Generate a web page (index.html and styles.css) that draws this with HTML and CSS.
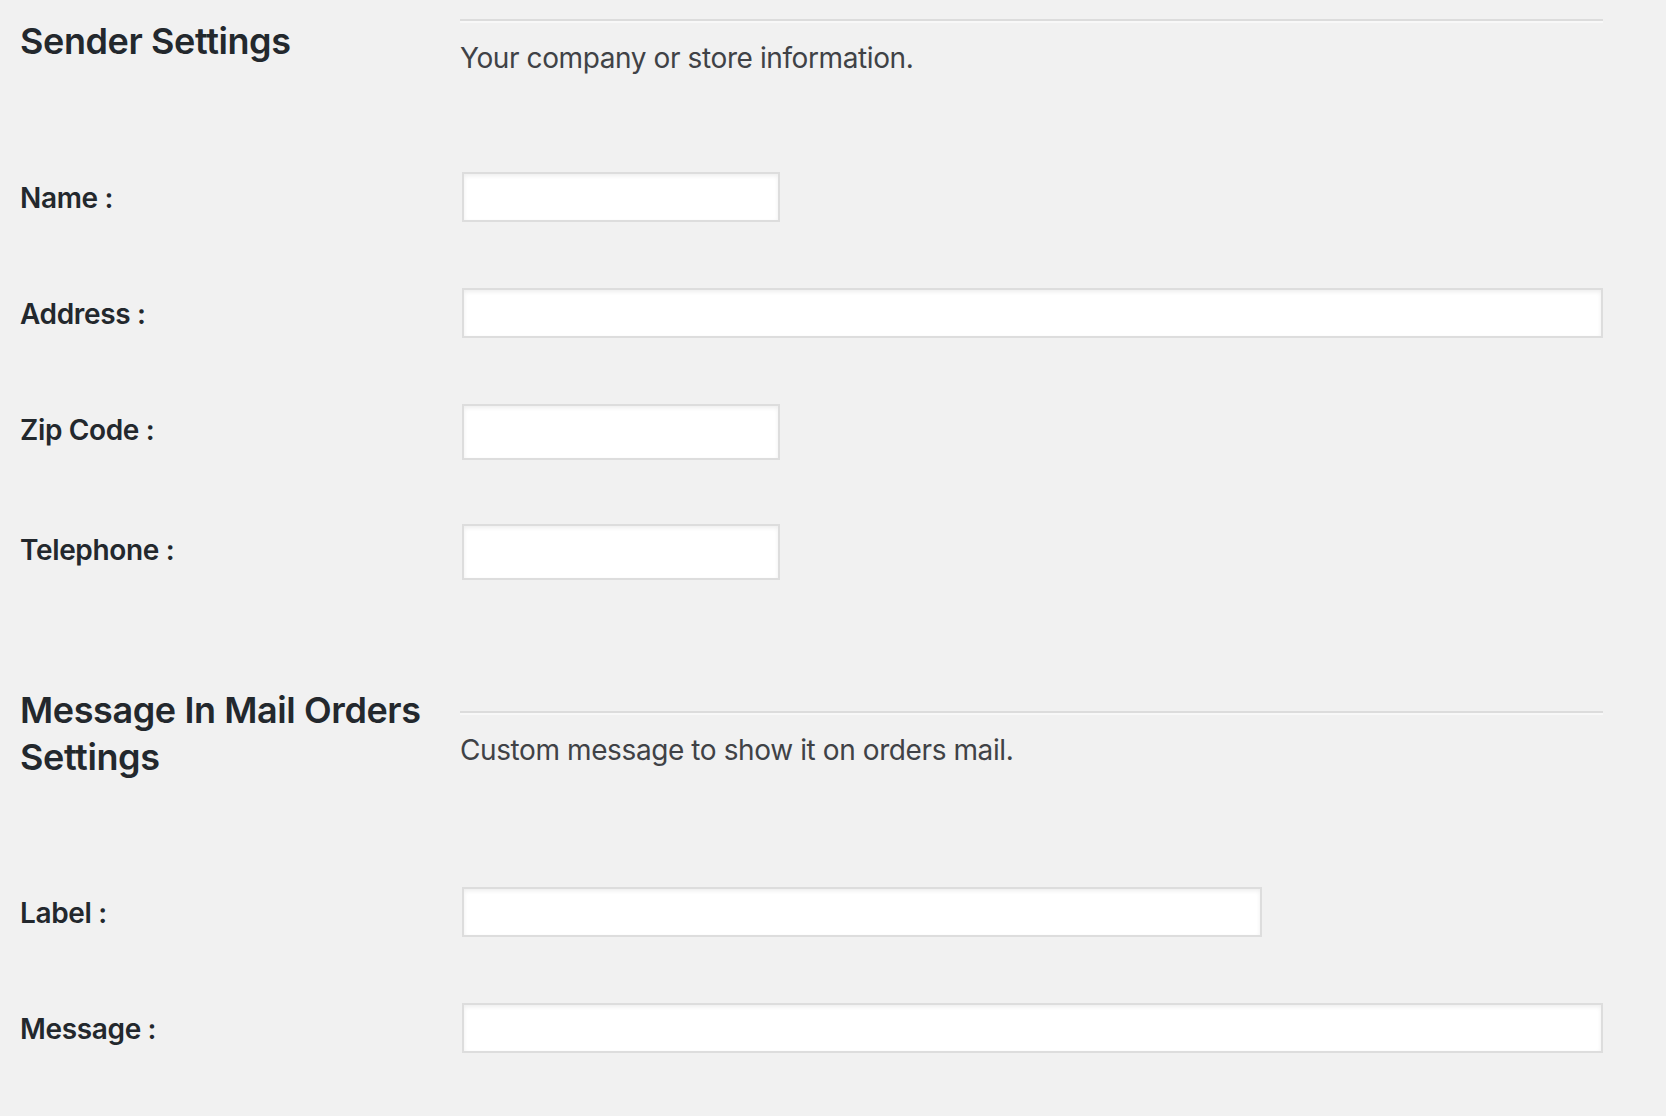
FILE: index.html
```html
<!DOCTYPE html>
<html lang="en">
<head>
<meta charset="utf-8">
<title>Settings</title>
<link rel="stylesheet" href="styles.css">
</head>
<body>
<main class="settings">
  <section class="settings-section">
    <header class="section-head">
      <h2 class="section-title">Sender Settings</h2>
      <div class="section-intro">
        <hr class="section-rule">
        <p class="section-desc">Your company or store information.</p>
      </div>
    </header>
    <div class="field-row">
      <label class="field-label" for="s-name">Name :</label>
      <div class="field-control"><input id="s-name" class="input input--short" type="text"></div>
    </div>
    <div class="field-row">
      <label class="field-label" for="s-address">Address :</label>
      <div class="field-control"><input id="s-address" class="input input--full" type="text"></div>
    </div>
    <div class="field-row">
      <label class="field-label" for="s-zip">Zip Code :</label>
      <div class="field-control"><input id="s-zip" class="input input--short input--tall" type="number"></div>
    </div>
    <div class="field-row">
      <label class="field-label" for="s-tel">Telephone :</label>
      <div class="field-control"><input id="s-tel" class="input input--short input--tall" type="tel"></div>
    </div>
  </section>

  <section class="settings-section settings-section--next">
    <header class="section-head">
      <h2 class="section-title">Message In Mail Orders Settings</h2>
      <div class="section-intro">
        <hr class="section-rule">
        <p class="section-desc">Custom message to show it on orders mail.</p>
      </div>
    </header>
    <div class="field-row">
      <label class="field-label" for="m-label">Label :</label>
      <div class="field-control"><input id="m-label" class="input input--medium" type="text"></div>
    </div>
    <div class="field-row">
      <label class="field-label" for="m-message">Message :</label>
      <div class="field-control"><input id="m-message" class="input input--full" type="text"></div>
    </div>
  </section>
</main>
</body>
</html>
```

FILE: styles.css
```css
* {
  box-sizing: border-box;
}

html,
body {
  margin: 0;
  padding: 0;
  background: #f1f1f1;
}

body {
  font-family: Inter, "Noto Sans", "Liberation Sans", sans-serif;
  color: #23282d;
}

.settings {
  width: 1603px;
  padding-left: 20px;
}

.settings-section--next {
  margin-top: 58px;
}

.section-head {
  display: flex;
  align-items: center;
  margin-bottom: 56px;
}

.section-title {
  flex: 0 0 440px;
  margin: 18px 0;
  padding-right: 10px;
  font-size: 36px;
  line-height: 1.3;
  font-weight: 600;
  letter-spacing: -0.4px;
  color: #23282d;
}

.section-intro {
  flex: 1 1 auto;
  padding-top: 18px;
  padding-bottom: 4px;
}

.section-rule {
  margin: 0;
  height: 0;
  border: 0;
  border-top: 2px solid #dcdcdc;
  border-bottom: 2px solid #f8f8f8;
}

.section-desc {
  margin: 15px 0 0;
  font-size: 28px;
  line-height: 1.45;
  font-weight: 400;
  color: #404246;
  letter-spacing: -0.4px;
}

.field-row {
  display: flex;
  align-items: flex-start;
  padding: 33px 0;
}

.field-label {
  flex: 0 0 440px;
  padding-top: 8px;
  font-size: 28px;
  line-height: 1.3;
  font-weight: 600;
  color: #23282d;
  letter-spacing: -0.35px;
}

.field-control {
  flex: 1 1 auto;
  display: flex;
}

.input {
  display: block;
  height: 50px;
  margin: 0 0 0 2px;
  padding: 4px 10px;
  background: #fff;
  border: 2px solid #dddddd;
  border-radius: 0;
  box-shadow: inset 0 2px 4px rgba(0, 0, 0, 0.07);
  font: inherit;
  font-size: 28px;
  color: #32373c;
  outline: none;
}

.input--short {
  width: 318px;
}

.input--medium {
  width: 800px;
}

.input--full {
  width: 1141px;
}

.input--tall {
  height: 56px;
  margin-bottom: -2px;
}
```
